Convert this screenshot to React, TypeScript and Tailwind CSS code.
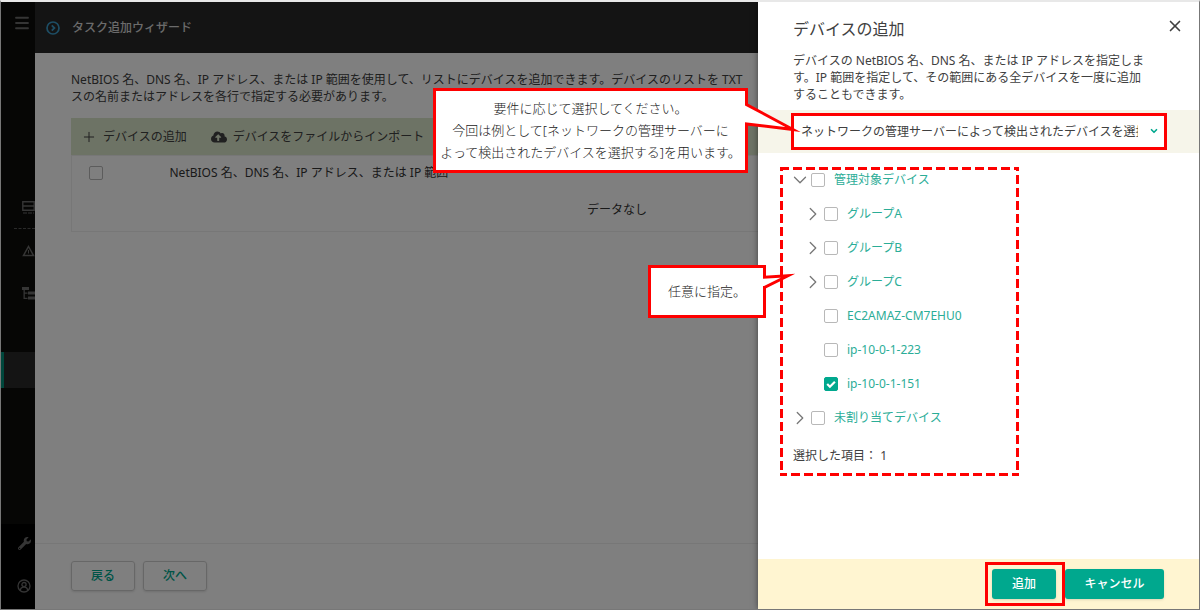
import clsx from "clsx";
import { ChevronDown, ChevronRight, Menu, Plus, X } from "lucide-react";
import { useState, type ReactNode } from "react";
import { FaCloudUploadAlt, FaWrench } from "react-icons/fa";

interface TreeNode {
  id: string;
  label: string;
  child?: boolean;
  state?: "open" | "closed";
}

const TREE: TreeNode[] = [
  { id: "managed", label: "管理対象デバイス", state: "open" },
  { id: "group-a", label: "グループA", child: true, state: "closed" },
  { id: "group-b", label: "グループB", child: true, state: "closed" },
  { id: "group-c", label: "グループC", child: true, state: "closed" },
  { id: "ec2", label: "EC2AMAZ-CM7EHU0", child: true },
  { id: "ip-223", label: "ip-10-0-1-223", child: true },
  { id: "ip-151", label: "ip-10-0-1-151", child: true },
  { id: "unassigned", label: "未割り当てデバイス", state: "closed" },
];

interface CheckboxProps {
  id: string;
  label?: string;
  checked?: boolean;
  onChange?: () => void;
}

function Checkbox({ id, label, checked = false, onChange }: CheckboxProps) {
  return (
    <span className="relative flex h-3.5 w-3.5 shrink-0">
      <input
        id={id}
        type="checkbox"
        aria-label={label}
        checked={checked}
        onChange={onChange}
        className="peer h-3.5 w-3.5 appearance-none rounded-[2px] border border-[#b8b8b8] checked:border-[#00a88e] checked:bg-[#00a88e]"
      />
      <svg
        viewBox="0 0 14 14"
        className="pointer-events-none absolute inset-0 hidden h-3.5 w-3.5 peer-checked:block"
        fill="none"
        stroke="#fff"
        strokeWidth="2.2"
      >
        <path d="M3.2 7l2.7 2.7 5-5" />
      </svg>
    </span>
  );
}

function Sidebar() {
  return (
    <nav className="flex w-[34px] shrink-0 flex-col overflow-hidden bg-[#0d0d0a] text-[#6a6a6a]">
      <button type="button" aria-label="メニュー" className="ml-3 mt-3 h-[18px] w-[18px]">
        <Menu size={18} strokeWidth={2.4} />
      </button>
      <svg width="13" height="13" viewBox="0 0 13 13" className="ml-[21px] mt-[169px] shrink-0" fill="none" stroke="currentColor">
        <path d="M.8.8h11.4v8.4H.8zM1 5h11" strokeWidth="1.4" />
        <path d="M1 12h11" strokeWidth="1" strokeDasharray="4 1" />
      </svg>
      <div className="ml-[13px] mt-[14px] border-t border-dashed border-[#555]" />
      <svg width="13" height="12" viewBox="0 0 13 12" className="ml-[21px] mt-4 shrink-0" fill="none" stroke="currentColor">
        <path d="M6.5 1.5l5 9h-10z" strokeWidth="1.5" />
        <path d="M6.5 5v3.5" strokeWidth="1" />
      </svg>
      <svg width="15" height="14" viewBox="0 0 15 14" className="ml-[21px] mt-[30px] shrink-0" fill="currentColor">
        <path d="M0 0h7v3H0zM1.5 3h1.3v9H1.5zM2.5 5.5h3v1.2h-3zM2.5 10.8h3V12h-3zM6 4.5h9v3H6zM6 9.5h9v3H6z" />
      </svg>
      <div className="mt-[51px] h-9 shrink-0 border-l-3 border-[#008f78] bg-[#282828]" />
      <div className="mt-auto flex h-[85px] flex-col items-end gap-[29px] bg-black pr-1 pt-[13px]">
        <FaWrench size={13} />
        <svg width="14" height="14" viewBox="0 0 14 14" fill="none" stroke="currentColor" strokeWidth="1.3">
          <circle cx="7" cy="7" r="6" />
          <circle cx="7" cy="5.6" r="2.1" />
          <path d="M3.4 11.4c0-4.4 7.2-4.4 7.2 0" />
        </svg>
      </div>
    </nav>
  );
}

function Wizard() {
  const footerButton =
    "h-[30px] w-16 rounded-[3px] border border-[#cfcfcf] text-xs font-medium text-[#00a88e] shadow-sm";
  return (
    <main className="flex min-w-0 flex-1 flex-col bg-white">
      <header className="flex h-[51px] items-center gap-3 bg-[#282828] px-[11px] text-[#d6d6d6]">
        <svg width="14" height="14" viewBox="0 0 14 14" fill="none" stroke="#3b9ccb" strokeWidth="1.7">
          <circle cx="7" cy="7" r="6" />
          <path d="M5.8 4.4L8.4 7 5.8 9.6" strokeWidth="1.8" />
        </svg>
        <h1 className="text-xs font-medium">タスク追加ウィザード</h1>
      </header>

      <section className="flex-1 px-9 pt-[18px]">
        <p className="whitespace-nowrap text-xs leading-[17px]">
          NetBIOS 名、DNS 名、IP アドレス、または IP 範囲を使用して、リストにデバイスを追加できます。デバイスのリストを TXT
          <br />
          スの名前またはアドレスを各行で指定する必要があります。
        </p>
        <div className="mt-[13px] flex h-[37px] items-center gap-6 bg-[#dbe6cb] px-2.5 text-xs">
          <button type="button" className="flex items-center gap-1.5">
            <Plus size={16} strokeWidth={1.5} />
            デバイスの追加
          </button>
          <button type="button" className="flex items-center gap-1.5">
            <FaCloudUploadAlt size={16} />
            デバイスをファイルからインポート
          </button>
        </div>
        <table className="w-full border border-[#eee] text-xs text-[#333]">
          <thead>
            <tr className="h-[34px]">
              <th className="w-[98px] pl-[17px]">
                <Checkbox id="select-all" label="すべて選択" />
              </th>
              <th className="text-left font-normal">NetBIOS 名、DNS 名、IP アドレス、または IP 範囲</th>
            </tr>
          </thead>
          <tbody>
            <tr className="h-[42px]">
              <td colSpan={2} className="text-center">
                データなし
              </td>
            </tr>
          </tbody>
        </table>
      </section>

      <footer className="flex gap-2 border-t border-[#eee] px-9 pb-[18px] pt-[17px]">
        <button type="button" className={footerButton}>
          戻る
        </button>
        <button type="button" className={footerButton}>
          次へ
        </button>
      </footer>
    </main>
  );
}

interface CalloutProps {
  className: string;
  tail: ReactNode;
  children: ReactNode;
}

function Callout({ className, tail, children }: CalloutProps) {
  return (
    <div
      className={clsx(
        "absolute flex items-center justify-center whitespace-nowrap border-3 border-[#fe0000] bg-white pb-0.5 text-center text-[13px] font-light leading-[22px] text-[#222]",
        className,
      )}
    >
      <p>{children}</p>
      {tail}
    </div>
  );
}

function DevicePanel() {
  const [selected, setSelected] = useState<string[]>(["ip-151"]);

  const toggle = (id: string) =>
    setSelected((prev) => (prev.includes(id) ? prev.filter((s) => s !== id) : [...prev, id]));

  return (
    <aside className="absolute inset-y-0 right-0 flex w-[441px] flex-col bg-white shadow-[0_0_6px_rgba(0,0,0,0.5)]">
      <div className="px-[35px] pt-[15px]">
        <div className="flex items-start justify-between">
          <h2 className="text-base leading-6">デバイスの追加</h2>
          <button type="button" aria-label="閉じる" className="-mr-5">
            <X size={18} strokeWidth={2.2} />
          </button>
        </div>
        <p className="mt-[11px] text-xs leading-[17px]">
          デバイスの NetBIOS 名、DNS 名、または IP アドレスを指定しま
          <br />
          す。IP 範囲を指定して、その範囲にある全デバイスを一度に追加
          <br />
          することもできます。
        </p>
      </div>

      <div className="relative mt-[7px] bg-[#f6f5ea] py-[3px] pl-[33px] pr-8">
        <select
          aria-label="デバイスの追加方法"
          className="block h-[37px] w-full appearance-none overflow-hidden border-3 border-[#fe0000] bg-white pl-[7px] pr-[26px] text-xs [text-overflow:clip]"
        >
          <option>ネットワークの管理サーバーによって検出されたデバイスを選択する</option>
        </select>
        <ChevronDown
          size={10}
          strokeWidth={4}
          className="pointer-events-none absolute right-10 top-4 text-[#00a88e]"
        />
        <Callout
          className="-left-[325px] -top-[22px] h-[85px] w-[315px]"
          tail={
            <svg width="60" height="34" viewBox="0 0 60 34" className="absolute -right-[60px] top-2.5">
              <path d="M0 4h4v18H0z" fill="#fff" />
              <path
                d="M1.5 0v3.5L48 28.5 1.5 23V34"
                fill="#fff"
                stroke="#fe0000"
                strokeWidth="3"
                strokeMiterlimit="8"
              />
            </svg>
          }
        >
          要件に応じて選択してください。
          <br />
          今回は例として[ネットワークの管理サーバーに
          <br />
          よって検出されたデバイスを選択する]を用います。
        </Callout>
      </div>

      <div className="relative ml-[22px] mt-3.5 w-[239px] pb-3 pl-[13px]">
        <ul className="-mt-1">
          {TREE.map((node) => (
            <li key={node.id} className={clsx("flex h-[34px] items-center", node.child && "pl-[13px]")}>
              <span className="w-[18px]">
                {node.state && (
                  <button
                    type="button"
                    aria-label={node.label}
                    aria-expanded={node.state === "open"}
                    className="-ml-1 block text-[#777]"
                  >
                    {node.state === "open" ? (
                      <ChevronDown size={22} strokeWidth={1.4} />
                    ) : (
                      <ChevronRight size={22} strokeWidth={1.4} />
                    )}
                  </button>
                )}
              </span>
              <Checkbox id={node.id} checked={selected.includes(node.id)} onChange={() => toggle(node.id)} />
              <label htmlFor={node.id} className="pl-[9px] text-xs text-[#2bad97]">
                {node.label}
              </label>
            </li>
          ))}
        </ul>
        <p className="pt-3 text-xs leading-[17px]">選択した項目： {selected.length}</p>
        {/* half of the outline is clipped by the svg box, so the visible line is 3px */}
        <svg className="pointer-events-none absolute inset-0 h-full w-full">
          <rect width="100%" height="100%" fill="none" stroke="#fe0000" strokeWidth="6" strokeDasharray="9 4" />
        </svg>
        <Callout
          className="-left-[132px] top-[98px] h-[53px] w-[118px]"
          tail={
            <svg width="36" height="19" viewBox="0 0 36 19" className="absolute -right-[36px] top-1">
              <path d="M0 5h4v9H0z" fill="#fff" />
              <path d="M1.5 0v5.2L25 3.8 1.5 15.5V19" fill="#fff" stroke="#fe0000" strokeWidth="3" strokeMiterlimit="8" />
            </svg>
          }
        >
          任意に指定。
        </Callout>
      </div>

      <footer className="mt-auto flex h-[50px] items-center justify-end gap-[9px] bg-[#fff5d1] pr-[35px] text-xs font-medium text-white">
        <span className="relative flex">
          <button type="button" className="h-[30px] w-16 rounded-[3px] bg-[#00a88e] shadow-sm">
            追加
          </button>
          <span className="pointer-events-none absolute -inset-y-[7px] -left-[7px] -right-[9px] z-10 border-3 border-[#fe0000]" />
        </span>
        <button type="button" className="h-[30px] w-[99px] rounded-[3px] bg-[#00a88e] shadow-sm">
          キャンセル
        </button>
      </footer>
    </aside>
  );
}

export default function App() {
  return (
    <div className="flex min-h-screen flex-col overflow-hidden border-x border-b border-t-2 border-[#777] border-t-[#e8e8e8] font-['Noto_Sans','Noto_Sans_CJK_JP',sans-serif] text-[#404040]">
      <div className="relative flex flex-1">
        <Sidebar />
        <Wizard />
        <div className="absolute inset-0 bg-black/50" />
        <DevicePanel />
      </div>
    </div>
  );
}
